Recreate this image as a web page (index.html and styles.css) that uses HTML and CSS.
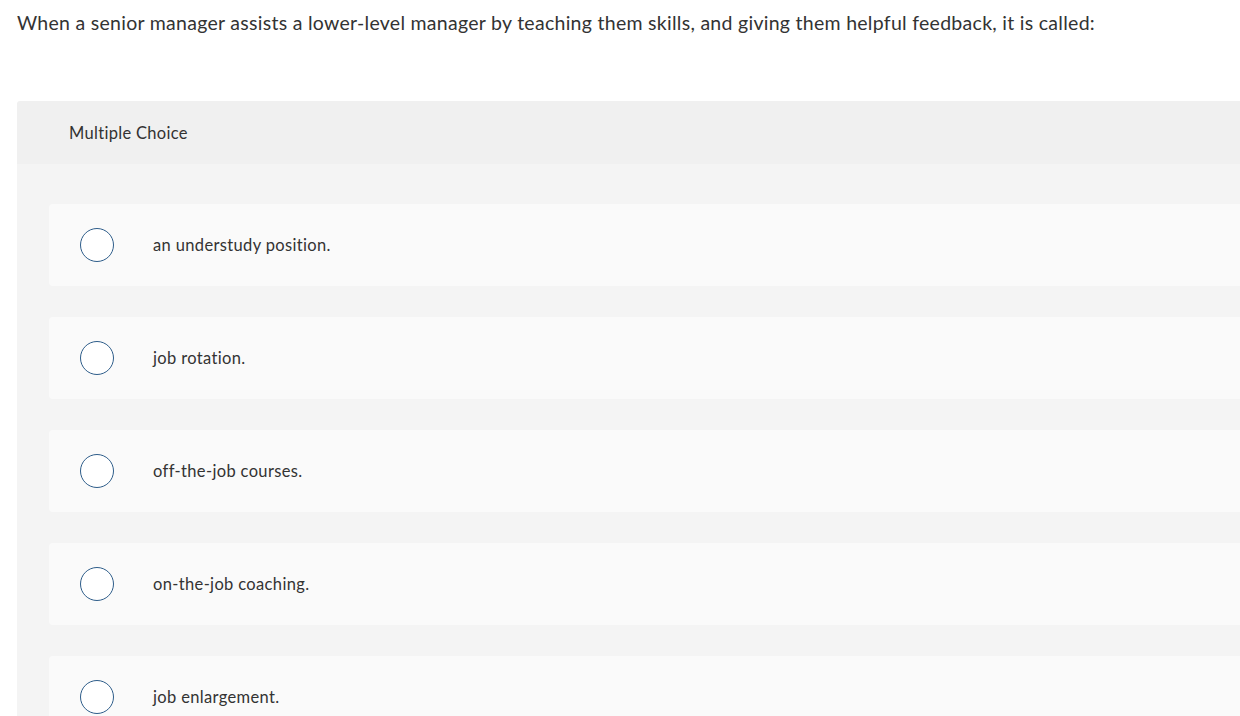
FILE: index.html
```html
<!DOCTYPE html>
<html>
<head>
<meta charset="utf-8">
<link rel="stylesheet" href="styles.css">
</head>
<body>
<p class="question">When a senior manager assists a lower-level manager by teaching them skills, and giving them helpful feedback, it is called:</p>
<div class="panel">
  <div class="panel-header">Multiple Choice</div>
  <div class="panel-body">
    <div class="option"><span class="radio"></span><span class="label">an understudy position.</span></div>
    <div class="option"><span class="radio"></span><span class="label">job rotation.</span></div>
    <div class="option"><span class="radio"></span><span class="label">off-the-job courses.</span></div>
    <div class="option"><span class="radio"></span><span class="label">on-the-job coaching.</span></div>
    <div class="option"><span class="radio"></span><span class="label">job enlargement.</span></div>
  </div>
</div>
</body>
</html>
```
FILE: styles.css
```css
html, body {
  margin: 0;
  padding: 0;
  background: #fff;
  overflow: hidden;
}
body {
  font-family: Lato, "Liberation Sans", sans-serif;
  color: #333;
  width: 1240px;
  height: 716px;
}
.question {
  margin: 0;
  padding: 11px 0 0 17px;
  font-size: 19.5px;
  letter-spacing: 0.28px;
  line-height: 24px;
  height: 90px;
  box-sizing: border-box;
}
.panel {
  margin: 11px 0 0 17px;
  border-top-left-radius: 3px;
  overflow: hidden;
}
.panel-header {
  background: #f0f0f0;
  height: 63px;
  display: flex;
  align-items: center;
  padding-left: 52px;
  font-size: 16.5px;
  letter-spacing: 0.3px;
}
.panel-body {
  background: #f4f4f4;
  padding: 40px 0 0 32px;
  display: flex;
  flex-direction: column;
  gap: 31px;
}
.option {
  background: #fafafa;
  height: 82px;
  border-radius: 4px 0 0 4px;
  display: flex;
  align-items: center;
  padding-left: 31px;
  flex-shrink: 0;
}
.radio {
  width: 32px;
  height: 32px;
  border: 1.5px solid #2e5d8a;
  border-radius: 50%;
  background: #fff;
  flex-shrink: 0;
}
.label {
  margin-left: 39px;
  font-size: 16.5px;
  letter-spacing: 0.35px;
}
```
